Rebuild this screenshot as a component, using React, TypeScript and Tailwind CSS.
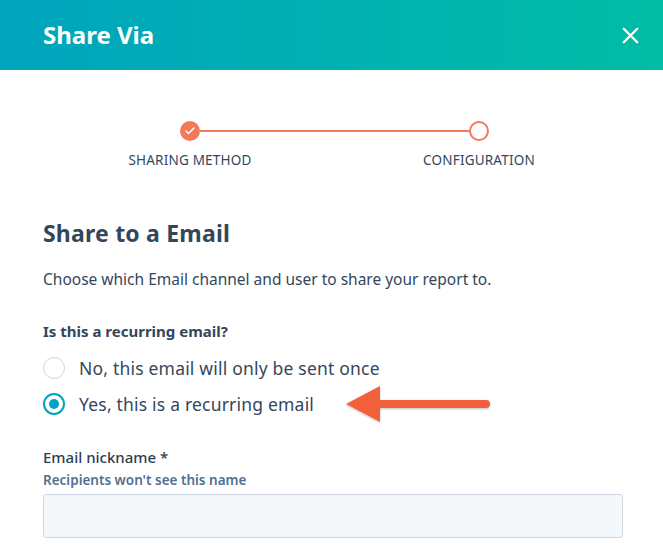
import {X, Check} from 'lucide-react'

const font = {fontFamily: '"Noto Sans", "Open Sans", sans-serif'}

function Radio({checked, label}: {checked?: boolean; label: string}) {
  return (
    <div className="flex items-center h-[28px] gap-[14px]">
      <span
        className={
          checked
            ? 'w-[22px] h-[22px] rounded-full border-2 border-[#00a4bd] bg-white flex items-center justify-center'
            : 'w-[22px] h-[22px] rounded-full border border-[#cbd6e2] bg-white'
        }
      >
        {checked && <span className="w-[10px] h-[10px] rounded-full bg-[#00a4bd]" />}
      </span>
      <span className="text-[17.5px] tracking-[0.2px] text-[#33475b]">{label}</span>
    </div>
  )
}

export default function App() {
  return (
    <div className="w-[663px] h-[560px] bg-white overflow-hidden" style={font}>
      {/* Header */}
      <header className="h-[70px] px-[43px] flex items-center justify-between bg-gradient-to-r from-[#00a4bd] to-[#00bda5]">
        <h1 className="text-[24px] font-bold text-white">Share Via</h1>
        <button type="button" className="text-white -mr-[24px]">
          <X className="w-[27px] h-[27px]" strokeWidth={2} />
        </button>
      </header>

      {/* Stepper */}
      <div className="mt-[51px]">
        <div className="flex items-center pl-[180px] w-[489px]">
          <span className="w-[20px] h-[20px] rounded-full bg-[#f2795a] flex items-center justify-center shrink-0">
            <Check className="w-[12px] h-[12px] text-white" strokeWidth={3} />
          </span>
          <span className="flex-1 h-[2px] bg-[#f2795a]" />
          <span className="w-[20px] h-[20px] rounded-full border-2 border-[#f2795a] bg-white shrink-0" />
        </div>
        <div className="flex mt-[10px] text-[13.5px] tracking-[0.2px] leading-[18px] text-[#33475b] uppercase">
          <span className="w-[160px] ml-[110px] text-center">Sharing Method</span>
          <span className="w-[160px] ml-[129px] text-center">Configuration</span>
        </div>
      </div>

      {/* Body */}
      <div className="pl-[43px] pr-[40px]">
        <h2 className="mt-[49px] text-[23px] leading-[30px] font-bold tracking-[0.2px] text-[#33475b]">
          Share to a Email
        </h2>
        <p className="mt-[20px] text-[15.5px] leading-[22px] text-[#33475b]">
          Choose which Email channel and user to share your report to.
        </p>
        <p className="mt-[30px] text-[15px] leading-[22px] font-bold text-[#33475b]">
          Is this a recurring email?
        </p>
        <div className="mt-[12px]">
          <Radio label="No, this email will only be sent once" />
        </div>
        <div className="mt-[8px] relative">
          <Radio checked label="Yes, this is a recurring email" />
          {/* Annotation arrow */}
          <svg
            className="absolute left-[301px] top-[-8px]"
            width="152"
            height="44"
            viewBox="0 0 152 44"
          >
            <defs>
              <filter id="sh" x="-10%" y="-30%" width="120%" height="160%">
                <feDropShadow dx="0" dy="1" stdDeviation="1" floodColor="#000" floodOpacity="0.25" />
              </filter>
            </defs>
            <g filter="url(#sh)" fill="#f2603a">
              <polygon points="2,22 36,4 36,40" />
              <rect x="32" y="18" width="114" height="8" rx="4" />
            </g>
          </svg>
        </div>

        <p className="mt-[28px] text-[15px] leading-[22px] font-medium text-[#2d3e50]">
          Email nickname *
        </p>
        <p className="mt-[3px] text-[13.5px] leading-[18px] font-semibold text-[#516f90]">
          Recipients won't see this name
        </p>
        <input
          type="text"
          className="mt-[5px] block w-full h-[44px] bg-[#f5f8fa] border border-[#cbd6e2] rounded-[3px]"
        />
      </div>
    </div>
  )
}
